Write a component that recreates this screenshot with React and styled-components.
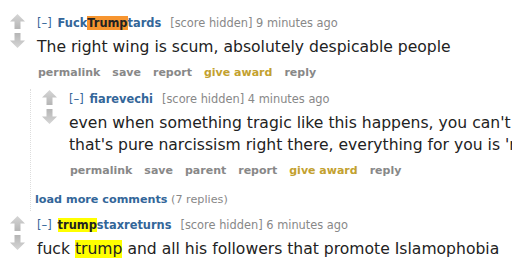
import React from 'react';
import styled, { createGlobalStyle } from 'styled-components';

const GlobalStyle = createGlobalStyle`
  body {
    margin: 0;
    background: #fff;
    font-family: 'DejaVu Sans', Verdana, sans-serif;
    overflow: hidden;
  }
`;

const Page = styled.div`
  width: 512px;
  height: 258px;
  overflow: hidden;
  padding-top: 13px;
  box-sizing: border-box;
`;

const Comment = styled.div`
  display: flex;
  align-items: flex-start;
  padding-left: ${(p) => p.indent || 10}px;
`;

const Arrows = styled.div`
  display: flex;
  flex-direction: column;
  gap: 4px;
  width: 15px;
  margin-right: 12px;
  padding-top: 1px;
`;

const Entry = styled.div`
  flex: 1;
  min-width: 0;
`;

const Tagline = styled.div`
  font-size: 11.4px;
  color: #888;
  line-height: 20px;
  white-space: nowrap;
  .expand {
    color: #369;
    margin-right: 6px;
  }
  .author {
    color: #369;
    font-weight: bold;
    margin-right: 9px;
  }
`;

const Body = styled.div`
  font-size: 15.6px;
  color: #222;
  line-height: 22px;
  white-space: nowrap;
  margin-top: 3px;
`;

const Buttons = styled.ul`
  list-style: none;
  margin: 3px 0 0;
  padding: 0;
  display: flex;
  gap: 10px;
  font-size: 11px;
  font-weight: bold;
  line-height: 24px;
  height: 24px;
  color: #888;
  li {
    padding: 0 1px;
  }
  .gold {
    color: #c3a12f;
  }
`;

const Mark = styled.span`
  background: ${(p) => (p.current ? '#f7952f' : '#ffff00')};
  color: #222;
`;

const Children = styled.div`
  margin-left: 30px;
  border-left: 1px dotted #ddd;
  margin-top: 4px;
  padding-bottom: 2px;
  margin-bottom: 4px;
`;

const LoadMore = styled.div`
  font-size: 11.2px;
  line-height: 18px;
  padding: 8px 0 0 4px;
  color: #888;
  b {
    color: #369;
  }
`;

const Arrow = ({ down }) => (
  <svg width="15" height="15" viewBox="0 0 15 15" style={{ transform: down ? 'rotate(180deg)' : 'none' }}>
    <defs>
      <linearGradient id={down ? 'gd' : 'gu'} x1="0" y1="0" x2="0" y2="1">
        <stop offset="0" stopColor="#d6d6d6" />
        <stop offset="1" stopColor="#b5b5b5" />
      </linearGradient>
    </defs>
    <path d="M7.5 0 L15 7.5 L10.5 7.5 L10.5 15 L4.5 15 L4.5 7.5 L0 7.5 Z" fill={`url(#${down ? 'gd' : 'gu'})`} />
  </svg>
);

const Vote = () => (
  <Arrows>
    <Arrow />
    <Arrow down />
  </Arrows>
);

const App = () => (
  <>
    <GlobalStyle />
    <Page>
      <Comment>
        <Vote />
        <Entry>
          <Tagline>
            <span className="expand">[–]</span>
            <span className="author">
              Fuck<Mark current>Trump</Mark>tards
            </span>
            [score hidden] 9 minutes ago
          </Tagline>
          <Body>The right wing is scum, absolutely despicable people</Body>
          <Buttons>
            <li>permalink</li>
            <li>save</li>
            <li>report</li>
            <li className="gold">give award</li>
            <li>reply</li>
          </Buttons>
        </Entry>
      </Comment>
      <Children>
        <Comment indent={11}>
          <Vote />
          <Entry>
            <Tagline>
              <span className="expand">[–]</span>
              <span className="author">fiarevechi</span>
              [score hidden] 4 minutes ago
            </Tagline>
            <Body>
              even when something tragic like this happens, you can't make it about yourself,
              <br />
              that's pure narcissism right there, everything for you is 'me me me'
            </Body>
            <Buttons>
              <li>permalink</li>
              <li>save</li>
              <li>parent</li>
              <li>report</li>
              <li className="gold">give award</li>
              <li>reply</li>
            </Buttons>
          </Entry>
        </Comment>
        <LoadMore>
          <b>load more comments</b> (7 replies)
        </LoadMore>
      </Children>
      <Comment>
        <Vote />
        <Entry>
          <Tagline>
            <span className="expand">[–]</span>
            <span className="author">
              <Mark>trump</Mark>staxreturns
            </span>
            [score hidden] 6 minutes ago
          </Tagline>
          <Body>
            fuck <Mark>trump</Mark> and all his followers that promote Islamophobia
          </Body>
        </Entry>
      </Comment>
    </Page>
  </>
);

export default App;
